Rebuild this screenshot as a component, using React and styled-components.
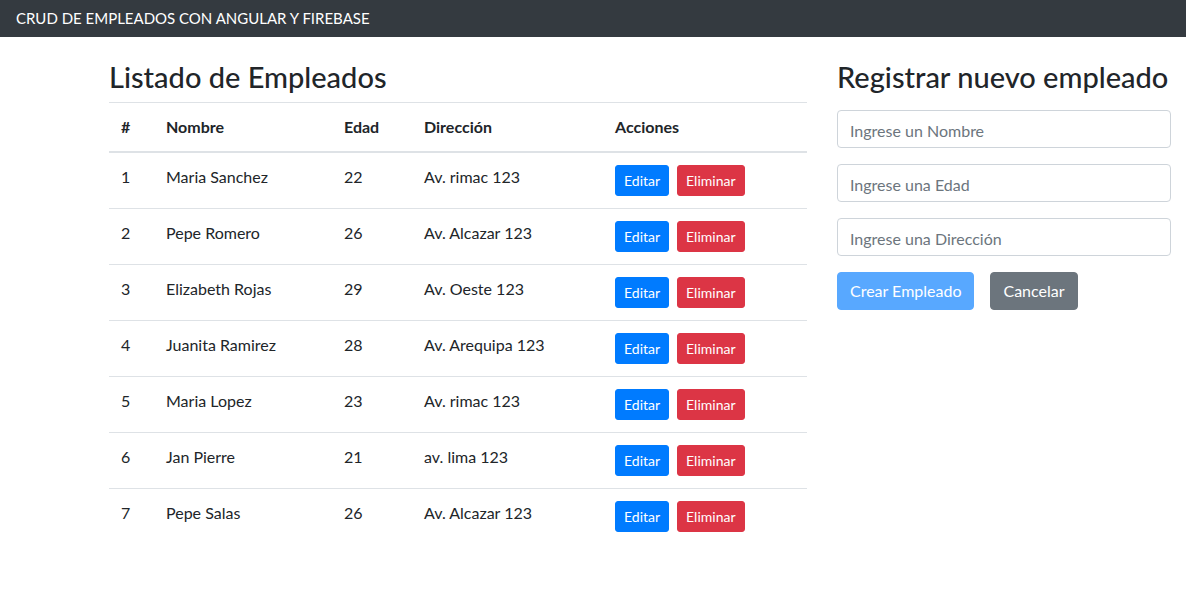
import React from "react"
import styled, { createGlobalStyle } from "styled-components"

const empleados = [
  { id: 1, nombre: "Maria Sanchez", edad: 22, direccion: "Av. rimac 123" },
  { id: 2, nombre: "Pepe Romero", edad: 26, direccion: "Av. Alcazar 123" },
  { id: 3, nombre: "Elizabeth Rojas", edad: 29, direccion: "Av. Oeste 123" },
  { id: 4, nombre: "Juanita Ramirez", edad: 28, direccion: "Av. Arequipa 123" },
  { id: 5, nombre: "Maria Lopez", edad: 23, direccion: "Av. rimac 123" },
  { id: 6, nombre: "Jan Pierre", edad: 21, direccion: "av. lima 123" },
  { id: 7, nombre: "Pepe Salas", edad: 26, direccion: "Av. Alcazar 123" },
]

const App = () => {
  return (
    <>
      <GlobalStyle />
      <Navbar>
        <Brand>CRUD DE EMPLEADOS CON ANGULAR Y FIREBASE</Brand>
      </Navbar>
      <Main>
        <ListColumn>
          <Title>Listado de Empleados</Title>
          <Table>
            <thead>
              <tr>
                <Th width={45}>#</Th>
                <Th width={178}>Nombre</Th>
                <Th width={80}>Edad</Th>
                <Th width={191}>Dirección</Th>
                <Th>Acciones</Th>
              </tr>
            </thead>
            <tbody>
              {empleados.map((e) => (
                <tr key={e.id}>
                  <Td>{e.id}</Td>
                  <Td>{e.nombre}</Td>
                  <Td>{e.edad}</Td>
                  <Td>{e.direccion}</Td>
                  <Td>
                    <SmallButton variant="primary">Editar</SmallButton>
                    <SmallButton variant="danger">Eliminar</SmallButton>
                  </Td>
                </tr>
              ))}
            </tbody>
          </Table>
        </ListColumn>
        <FormColumn>
          <Title>Registrar nuevo empleado</Title>
          <Form>
            <Input placeholder="Ingrese un Nombre" />
            <Input placeholder="Ingrese una Edad" />
            <Input placeholder="Ingrese una Dirección" />
            <Actions>
              <Button variant="primary" disabled>Crear Empleado</Button>
              <Button variant="secondary">Cancelar</Button>
            </Actions>
          </Form>
        </FormColumn>
      </Main>
    </>
  )
}

export default App

const colors = {
  primary: "#007bff",
  danger: "#dc3545",
  secondary: "#6c757d",
}

const GlobalStyle = createGlobalStyle`
  * { box-sizing: border-box; }
  body {
    margin: 0;
    background: #fff;
    color: #212529;
    font-family: "Lato", "Noto Sans", sans-serif;
    font-size: 16px;
    line-height: 1.5;
  }
`

const Navbar = styled.nav`
  background: #343a40;
  height: 37px;
  display: flex;
  align-items: center;
  padding: 0 16px;
`

const Brand = styled.span`
  color: #fff;
  font-size: 15px;
`

const Main = styled.main`
  display: flex;
  gap: 30px;
  padding: 23px 15px 0 109px;
`

const ListColumn = styled.section`
  width: 698px;
`

const FormColumn = styled.section`
  flex: 1;
`

const Title = styled.h3`
  margin: 0 0 8px;
  font-size: 29px;
  font-weight: 500;
  line-height: 34px;
  white-space: nowrap;
`

const Table = styled.table`
  width: 100%;
  border-collapse: collapse;
`

const Th = styled.th`
  width: ${(p) => (p.width ? `${p.width}px` : "auto")};
  text-align: left;
  font-weight: 700;
  padding: 12px;
  border-top: 1px solid #dee2e6;
  border-bottom: 2px solid #dee2e6;
`

const Td = styled.td`
  padding: 12px;
  vertical-align: top;
  border-top: 1px solid #dee2e6;
  white-space: nowrap;
`

const SmallButton = styled.button`
  font-family: inherit;
  font-size: 14px;
  line-height: 1.5;
  padding: 4px 8px;
  border: 1px solid ${(p) => colors[p.variant]};
  border-radius: 3px;
  background: ${(p) => colors[p.variant]};
  color: #fff;
  margin-right: 8px;
`

const Form = styled.form`
  display: flex;
  flex-direction: column;
  gap: 16px;
  padding-top: 8px;
`

const Input = styled.input`
  height: 38px;
  padding: 7px 12px 5px;
  font-family: inherit;
  font-size: 16px;
  color: #495057;
  border: 1px solid #ced4da;
  border-radius: 4px;

  &::placeholder {
    color: #6c757d;
  }
`

const Actions = styled.div`
  display: flex;
  gap: 16px;
`

const Button = styled.button`
  font-family: inherit;
  font-size: 16px;
  line-height: 1.5;
  padding: 6px 12px;
  border: 1px solid ${(p) => colors[p.variant]};
  border-radius: 4px;
  background: ${(p) => colors[p.variant]};
  color: #fff;

  &:disabled {
    opacity: 0.65;
  }
`
